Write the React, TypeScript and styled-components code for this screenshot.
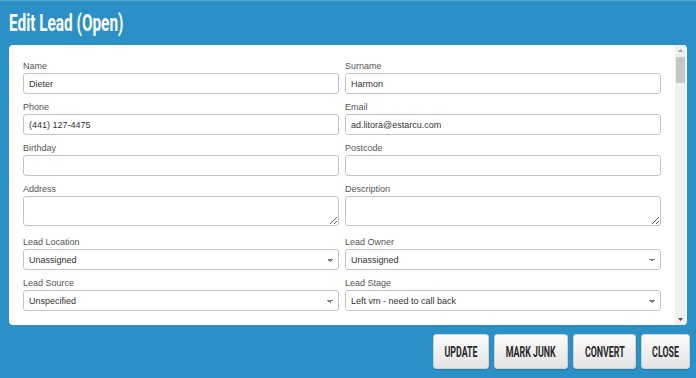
import styled, { createGlobalStyle } from 'styled-components'

const GlobalStyle = createGlobalStyle`
  html, body {
    margin: 0;
    padding: 0;
    background: #2b90c5;
  }
  * {
    box-sizing: border-box;
  }
`

interface IField {
  label: string
  value?: string
  kind?: 'input' | 'textarea' | 'select'
}

const fields: IField[] = [
  { label: 'Name', value: 'Dieter' },
  { label: 'Surname', value: 'Harmon' },
  { label: 'Phone', value: '(441) 127-4475' },
  { label: 'Email', value: 'ad.litora@estarcu.com' },
  { label: 'Birthday' },
  { label: 'Postcode' },
  { label: 'Address', kind: 'textarea' },
  { label: 'Description', kind: 'textarea' },
  { label: 'Lead Location', value: 'Unassigned', kind: 'select' },
  { label: 'Lead Owner', value: 'Unassigned', kind: 'select' },
  { label: 'Lead Source', value: 'Unspecified', kind: 'select' },
  { label: 'Lead Stage', value: 'Left vm - need to call back', kind: 'select' }
]

const buttons = [
  { text: 'UPDATE', width: 56 },
  { text: 'MARK JUNK', width: 74 },
  { text: 'CONVERT', width: 63 },
  { text: 'CLOSE', width: 49 }
]

const App = (): JSX.Element => {
  return (
    <Page>
      <GlobalStyle />
      <Header>
        <Title>Edit Lead (Open)</Title>
      </Header>
      <Card>
        <Form>
          {fields.map(field => (
            <Field key={field.label}>
              <Label>{field.label}</Label>
              {field.kind === 'textarea' ? (
                <TextArea defaultValue={field.value ?? ''} />
              ) : field.kind === 'select' ? (
                <Select defaultValue={field.value}>
                  <option>{field.value}</option>
                </Select>
              ) : (
                <Input type="text" defaultValue={field.value ?? ''} />
              )}
            </Field>
          ))}
        </Form>
        {/* Scrollbar */}
        <ScrollBar>
          <ScrollArrow>
            <svg width="5" height="3" viewBox="0 0 5 3">
              <path d="M0 3 L2.5 0 L5 3 Z" fill="#a3a3a3" />
            </svg>
          </ScrollArrow>
          <ScrollTrack>
            <ScrollThumb />
          </ScrollTrack>
          <ScrollArrow>
            <svg width="5" height="3" viewBox="0 0 5 3">
              <path d="M0 0 L2.5 3 L5 0 Z" fill="#505050" />
            </svg>
          </ScrollArrow>
        </ScrollBar>
      </Card>
      <Footer>
        {buttons.map(btn => (
          <Button key={btn.text} $width={btn.width}>
            <ButtonText>{btn.text}</ButtonText>
          </Button>
        ))}
      </Footer>
    </Page>
  )
}

const Page = styled.div`
  height: 378px;
  display: flex;
  flex-direction: column;
  background: #2b90c5;
  overflow: hidden;
`
const Header = styled.div`
  height: 45px;
  flex-shrink: 0;
  padding: 2px 0 0 9px;
  border-top: 1px solid #5aa6cf;
`
const Title = styled.h1`
  display: inline-block;
  margin: 0;
  font-family: Roboto, 'Liberation Sans', sans-serif;
  font-weight: 700;
  font-size: 24px;
  line-height: 41px;
  color: #ffffff;
  white-space: nowrap;
  transform: scaleX(0.64);
  transform-origin: left center;
`
const Card = styled.div`
  flex-shrink: 0;
  display: flex;
  height: 280px;
  margin: 0 9px;
  background: #ffffff;
  border-radius: 4px;
  overflow: hidden;
`
const Form = styled.div`
  flex: 1;
  display: grid;
  grid-template-columns: 1fr 1fr;
  grid-auto-rows: min-content;
  column-gap: 6px;
  row-gap: 7px;
  padding: 15px 14px 0 14px;
`
const Field = styled.div`
  display: flex;
  flex-direction: column;
`
const Label = styled.label`
  display: block;
  margin-bottom: 1px;
  font-family: 'Liberation Sans', Arial, sans-serif;
  font-size: 9px;
  line-height: 12px;
  color: #555555;
`
const Input = styled.input`
  display: block;
  width: 100%;
  height: 21px;
  margin: 0;
  padding: 0 5px;
  border: 1px solid #c4c4c4;
  border-radius: 3px;
  font-family: 'Liberation Sans', Arial, sans-serif;
  font-size: 9px;
  color: #333333;
  background: #ffffff;
  outline: none;
`
const TextArea = styled.textarea`
  display: block;
  width: 100%;
  height: 30px;
  margin: 0 0 3px 0;
  padding: 3px 5px;
  border: 1px solid #c4c4c4;
  border-radius: 3px;
  font-family: 'Liberation Sans', Arial, sans-serif;
  font-size: 9px;
  color: #333333;
  resize: both;
  outline: none;
`
const Select = styled.select`
  display: block;
  width: 100%;
  height: 21px;
  margin: 0;
  padding: 0 20px 0 5px;
  border: 1px solid #c4c4c4;
  border-radius: 3px;
  font-family: 'Liberation Sans', Arial, sans-serif;
  font-size: 9px;
  color: #333333;
  outline: none;
  appearance: none;
  background-color: #ffffff;
  background-image: linear-gradient(45deg, transparent 50%, #808080 50%),
    linear-gradient(-45deg, transparent 50%, #808080 50%);
  background-size: 3px 3px;
  background-repeat: no-repeat;
  background-position: calc(100% - 8px) 9px, calc(100% - 5px) 9px;
`
const ScrollBar = styled.div`
  flex: 0 0 11px;
  display: flex;
  flex-direction: column;
  background: #f0f0f0;
  margin-right: 1px;
`
const ScrollArrow = styled.div`
  flex: 0 0 11px;
  display: flex;
  align-items: center;
  justify-content: center;
`
const ScrollTrack = styled.div`
  flex: 1;
  padding: 1px 1px 0 1px;
`
const ScrollThumb = styled.div`
  height: 26px;
  background: #c6c6c6;
`
const Footer = styled.div`
  display: flex;
  justify-content: flex-end;
  gap: 5px;
  padding: 9px 6px 0 0;
`
const Button = styled.button<{ $width: number }>`
  display: flex;
  align-items: center;
  justify-content: center;
  width: ${p => p.$width}px;
  height: 35px;
  padding: 0;
  border: 1px solid #d0d0d0;
  border-radius: 3px;
  background: linear-gradient(#fbfbfb, #e4e4e4);
  box-shadow: 0 1px 1px rgba(0, 0, 0, 0.15);
  overflow: visible;
  cursor: pointer;
`
const ButtonText = styled.span`
  display: inline-block;
  font-family: Roboto, 'Liberation Sans', sans-serif;
  font-weight: 700;
  font-size: 15.5px;
  color: #2a2a2a;
  white-space: nowrap;
  transform: scaleX(0.57);
`

export default App
